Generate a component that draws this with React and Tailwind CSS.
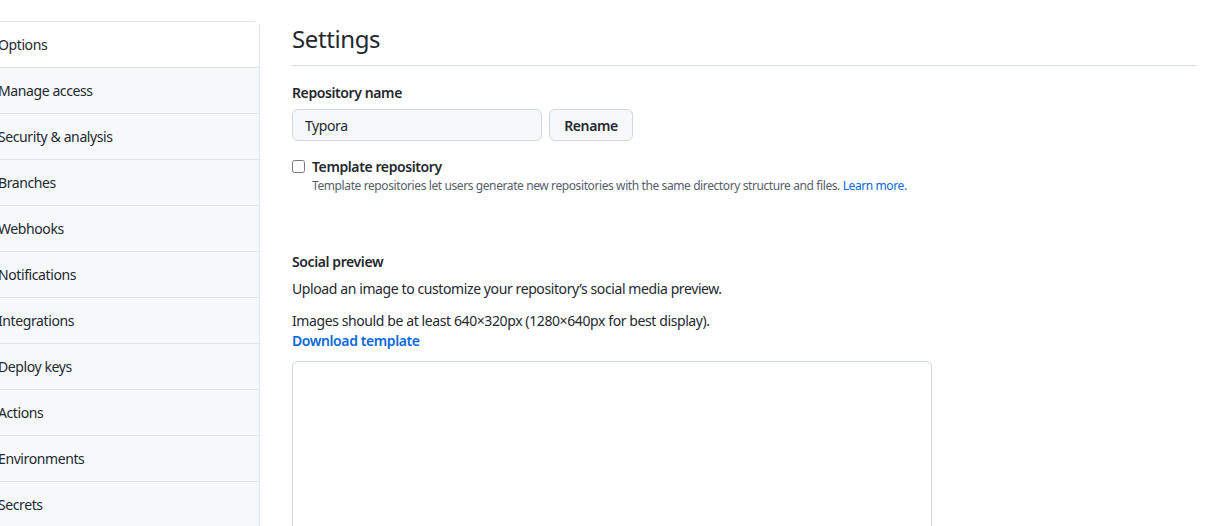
export default function App() {
  const items = [
    "Options",
    "Manage access",
    "Security & analysis",
    "Branches",
    "Webhooks",
    "Notifications",
    "Integrations",
    "Deploy keys",
    "Actions",
    "Environments",
    "Secrets",
  ];
  return (
    <div
      className="w-[1231px] h-[526px] overflow-hidden bg-white text-[#24292f] tracking-[-0.025em]"
      style={{ fontFamily: '"Noto Sans", "Open Sans", sans-serif' }}
    >
      <div className="flex pt-[21px] ml-[-18px]">
        <nav className="w-[278px] shrink-0 border-t border-r border-[#e1e4e8] rounded-tr-[6px]">
          {items.map((it, i) => (
            <div
              key={it}
              className={`h-[46px] flex items-center px-4 text-[14px] border-b border-[#e1e4e8] ${
                i === 0 ? "bg-white" : "bg-[#f6f8fa]"
              }`}
            >
              {it}
            </div>
          ))}
        </nav>
        <main className="ml-[32px] w-[904px]">
          <div className="border-b border-[#d8dee4] pb-2">
            <h2 className="text-[24px] leading-[36px] font-normal">Settings</h2>
          </div>
          <div className="mt-4">
            <label className="block text-[14px] leading-[21px] font-semibold">Repository name</label>
            <div className="flex gap-[7px] mt-[6px]">
              <input
                defaultValue="Typora"
                className="w-[250px] h-[32px] px-3 text-[14px] bg-[#f6f8fa] border border-[#d0d7de] rounded-[6px] outline-none"
              />
              <button className="h-[32px] w-[84px] text-[14px] font-semibold bg-[#f6f8fa] border border-[#d0d7de] rounded-[6px]">
                Rename
              </button>
            </div>
          </div>
          <div className="mt-[15px]">
            <div className="flex items-center gap-[7px]">
              <input type="checkbox" className="w-[13px] h-[13px] m-0" />
              <span className="text-[14px] leading-[21px] font-semibold">Template repository</span>
            </div>
            <p className="ml-[20px] text-[12px] leading-[18px] text-[#57606a]">
              Template repositories let users generate new repositories with the same directory structure and files.{" "}
              <a className="text-[#0969da]">Learn more.</a>
            </p>
          </div>
          <div className="mt-[56px]">
            <div className="text-[14px] leading-[21px] font-semibold">Social preview</div>
            <p className="mt-[6px] text-[14px] leading-[21px]">
              Upload an image to customize your repository’s social media preview.
            </p>
            <p className="mt-[11px] text-[14px] leading-[21px]">
              Images should be at least 640×320px (1280×640px for best display).
            </p>
            <a className="block text-[14px] leading-[20px] font-semibold text-[#0969da]">Download template</a>
            <div className="mt-[10px] w-[640px] h-[200px] border border-[#d0d7de] rounded-[6px]" />
          </div>
        </main>
      </div>
    </div>
  );
}
